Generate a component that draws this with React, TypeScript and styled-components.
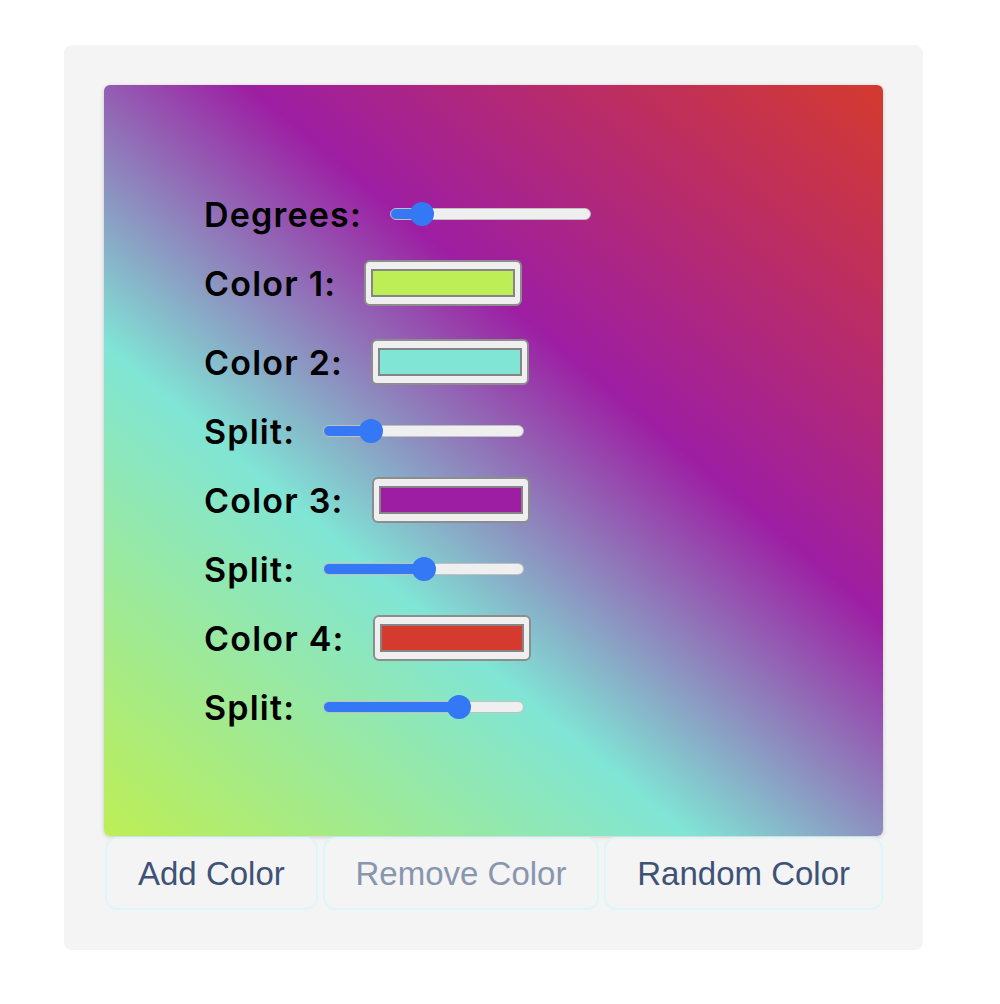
import { useState } from "react";
import type { CSSProperties } from "react";
import styled, { createGlobalStyle } from "styled-components";

type Stop = { color: string; split: number };

const initialStops: Stop[] = [
  { color: "#bdee55", split: 0 },
  { color: "#80e5d5", split: 20 },
  { color: "#9d1ea3", split: 50 },
  { color: "#d43a2e", split: 70 },
];

// last colour always closes the gradient, the others sit a little past their split
const stopAt = (split: number, last: boolean) =>
  last ? 100 : Math.round(17 + split * 0.9);

const randomHex = () =>
  "#" +
  Math.floor(Math.random() * 0xffffff)
    .toString(16)
    .padStart(6, "0");

const GlobalStyle = createGlobalStyle`
  body {
    margin: 0;
    background: #ffffff;
  }
`;

const Slider = ({
  value,
  max,
  onChange,
}: {
  value: number;
  max: number;
  onChange: (v: number) => void;
}) => (
  <Range
    min={0}
    max={max}
    value={value}
    style={{ "--fill": value / max } as CSSProperties}
    onChange={(e) => onChange(Number(e.target.value))}
  />
);

const App = () => {
  const [degrees, setDegrees] = useState(40);
  const [stops, setStops] = useState<Stop[]>(initialStops);

  const gradient = `linear-gradient(${degrees}deg, ${stops
    .map((s, i) =>
      i === 0 ? `${s.color} 0%` : `${s.color} ${stopAt(s.split, i === stops.length - 1)}%`
    )
    .join(", ")})`;

  const update = (index: number, patch: Partial<Stop>) =>
    setStops((prev) => prev.map((s, i) => (i === index ? { ...s, ...patch } : s)));

  return (
    <>
      <GlobalStyle />
      <Card>
        <Preview style={{ background: gradient }}>
          <Form>
            <Row>
              <Label>Degrees:</Label>
              <Slider value={degrees} max={360} onChange={setDegrees} />
            </Row>
            {stops.map((stop, i) => (
              <div key={i}>
                <Row $spaced={i === 0}>
                  <Label>Color {i + 1}:</Label>
                  <Swatch
                    value={stop.color}
                    onChange={(e) => update(i, { color: e.target.value })}
                  />
                </Row>
                {i > 0 && (
                  <Row>
                    <Label>Split:</Label>
                    <Slider
                      value={stop.split}
                      max={100}
                      onChange={(v) => update(i, { split: v })}
                    />
                  </Row>
                )}
              </div>
            ))}
          </Form>
        </Preview>
        <Buttons>
          <Button
            onClick={() =>
              setStops((prev) => [...prev, { color: randomHex(), split: 90 }])
            }
          >
            Add Color
          </Button>
          <Button
            disabled={stops.length <= 4}
            onClick={() => setStops((prev) => prev.slice(0, -1))}
          >
            Remove Color
          </Button>
          <Button
            onClick={() =>
              setStops((prev) => prev.map((s) => ({ ...s, color: randomHex() })))
            }
          >
            Random Color
          </Button>
        </Buttons>
      </Card>
    </>
  );
};

const Card = styled.div`
  box-sizing: border-box;
  width: 859px;
  margin: 45px 0 0 64px;
  padding: 40px;
  background: #f4f4f4;
  border-radius: 8px;
`;

const Preview = styled.div`
  box-sizing: border-box;
  min-height: 751px;
  border-radius: 6px;
  box-shadow: 0 1px 4px rgba(0, 0, 0, 0.18);
`;

const Form = styled.div`
  display: flex;
  flex-direction: column;
  padding: 106px 0 80px 100px;
`;

const Row = styled.div<{ $spaced?: boolean }>`
  display: flex;
  align-items: center;
  height: 46px;
  margin-bottom: ${({ $spaced }) => ($spaced ? "33px" : "23px")};
`;

const Label = styled.label`
  font-family: Inter, "Noto Sans", sans-serif;
  font-weight: 600;
  font-size: 34px;
  letter-spacing: 1.2px;
  color: #000000;
  margin-right: 28px;
  white-space: nowrap;
`;

const Range = styled.input.attrs({ type: "range" })`
  -webkit-appearance: none;
  appearance: none;
  width: 201px;
  height: 24px;
  margin: 0;
  background: transparent;
  cursor: pointer;

  &::-webkit-slider-runnable-track {
    box-sizing: border-box;
    height: 12px;
    border: 1px solid #c0c0c0;
    border-radius: 6px;
    background: linear-gradient(
      to right,
      #3478f6 calc(13px + var(--fill) * 175px),
      #efefef calc(13px + var(--fill) * 175px)
    );
    background-origin: border-box;
  }

  &::-webkit-slider-thumb {
    -webkit-appearance: none;
    width: 24px;
    height: 24px;
    margin-top: -7px;
    border: none;
    border-radius: 50%;
    background: #3478f6;
  }
`;

const Swatch = styled.input.attrs({ type: "color" })`
  -webkit-appearance: none;
  appearance: none;
  box-sizing: border-box;
  width: 158px;
  height: 46px;
  margin: 0;
  padding: 0;
  border: 2px solid #8d8d8d;
  border-radius: 6px;
  background: #efefef;
  cursor: pointer;

  &::-webkit-color-swatch-wrapper {
    padding: 7px 5px;
  }

  &::-webkit-color-swatch {
    border: 2px solid #858585;
    border-radius: 0;
  }
`;

const Buttons = styled.div`
  display: flex;
  justify-content: space-between;
  margin-top: 1px;
  padding-left: 1px;
`;

const Button = styled.button`
  box-sizing: border-box;
  flex-shrink: 0;
  height: 73px;
  padding: 0 31px;
  border: 2px solid #ddf7f8;
  border-radius: 12px;
  background: #f4f4f4;
  font-family: "Liberation Sans", Arial, sans-serif;
  font-size: 33px;
  color: #3d5276;
  white-space: nowrap;
  cursor: pointer;

  &:disabled {
    color: #8896ae;
    cursor: default;
  }
`;

export default App;
